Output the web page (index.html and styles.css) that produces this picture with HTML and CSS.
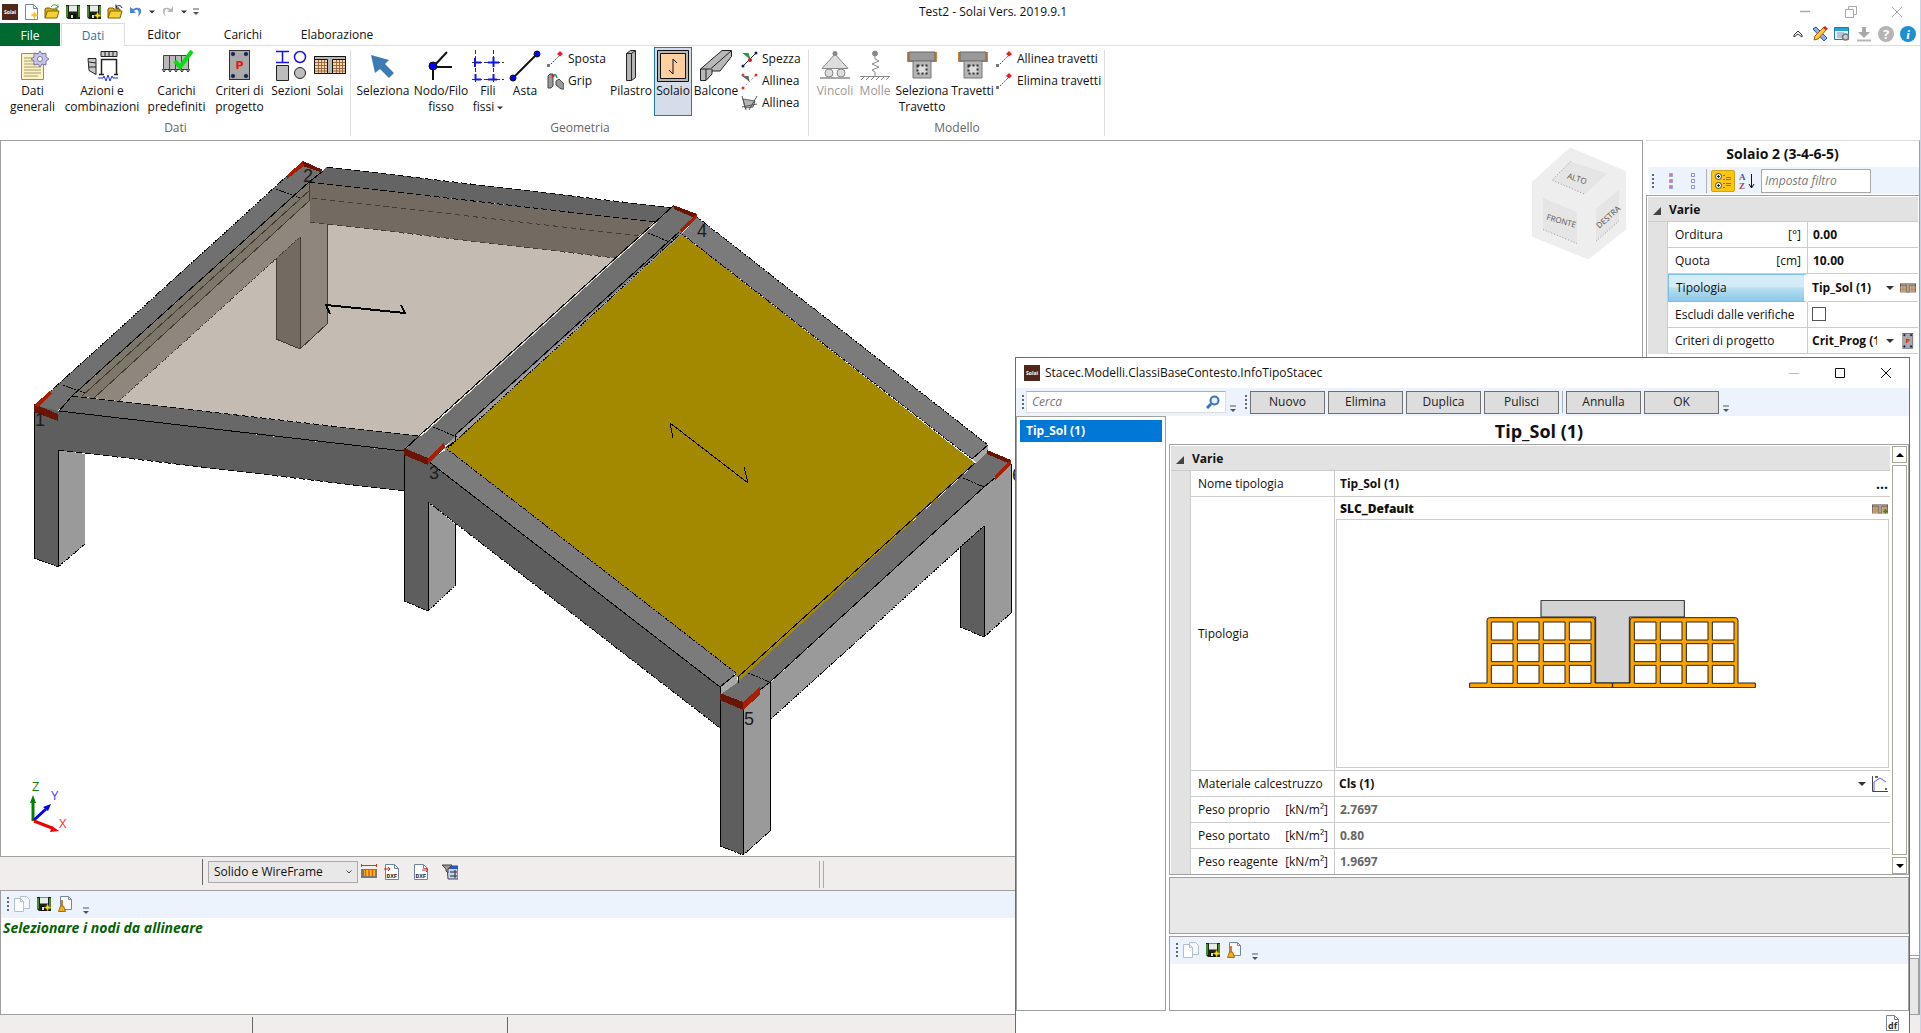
FILE: index.html
```html
<!DOCTYPE html>
<html lang="it">
<head>
<meta charset="utf-8">
<title>Test2 - Solai Vers. 2019.9.1</title>
<link rel="stylesheet" href="styles.css">
</head>
<body>
<svg class="defs" aria-hidden="true">
  <symbol id="logo" viewBox="0 0 16 16"><rect width="16" height="16" fill="#4f281a"/><text x="8" y="10" text-anchor="middle" class="logo-text">Solai</text></symbol>
  <symbol id="disk" viewBox="0 0 16 16"><path d="M1 1h14v14H3l-2-2z" fill="#1c241c"/><path d="M4 1.500h8v6H4z" fill="#e8ece8"/><path d="M2 2v11M14 2v11" stroke="#58a838" stroke-width="1.500"/><path d="M5 10h6v5H5z" fill="#111"/><path d="M6 11h2v3H6z" fill="#ddd"/></symbol>
  <symbol id="disk-new" viewBox="0 0 16 16"><use href="#disk"/><path d="M11.500 8l1 2.500 2.500 1-2.500 1-1 2.500-1-2.500-2.500-1 2.500-1z" fill="#ffe000" stroke="#d8a800" stroke-width=".5"/></symbol>
  <symbol id="folder" viewBox="0 0 16 16"><path d="M1 14V5l1-1h4l1 1h6v3" fill="#e0b400" stroke="#7c6200"/><path d="M1 14l2.500-7H15l-2 7z" fill="#f5d03a" stroke="#7c6200"/></symbol>
  <symbol id="page" viewBox="0 0 16 16"><path d="M2.500.500h8l4 4v11h-12z" fill="#fff" stroke="#7088a0"/><path d="M10.500.500v4h4" fill="none" stroke="#7088a0"/></symbol>
  <symbol id="copy" viewBox="0 0 16 16"><path d="M6.500.500h6l3 3v9h-9z" fill="#f4f7fb" stroke="#b4bfcc"/><path d="M.500 2.500h6l3 3v10h-9z" fill="#fff" stroke="#b4bfcc"/><path d="M6.500 2.500v3h3" fill="none" stroke="#b4bfcc"/></symbol>
  <symbol id="clean" viewBox="0 0 16 16"><path d="M2.500.500h8l3 3v10h-11z" fill="#fff" stroke="#7088a0"/><path d="M10.500.500v3h3" fill="none" stroke="#7088a0"/><path d="M4 4v6" stroke="#b05a00" stroke-width="1.500"/><path d="M2.500 10h3l2 5.500H.500z" fill="#f4b020" stroke="#b06a00"/></symbol>
  <symbol id="more" viewBox="0 0 8 8"><path d="M1 1h6" stroke="#555"/><path d="M1 4h6L4 7z" fill="#555"/></symbol>
  <symbol id="caret" viewBox="0 0 8 8"><path d="M0 2h8L4 6z" fill="#333"/></symbol>
  <symbol id="slab" viewBox="0 0 32 18"><rect x=".5" y=".5" width="31" height="17" fill="#ffcf9f" stroke="#111"/><path d="M1 6.500h12M1 9.500h12M1 12.500h12M1 15h12M4.500 4v13M7.500 4v13M10.500 4v13M19 6.500h12M19 9.500h12M19 12.500h12M19 15h12M22.500 4v13M25.500 4v13M28.500 4v13" stroke="#7a5a3a" stroke-width=".8"/><path d="M.500.500h31v3H18.500v14h-5v-14H.500z" fill="#b8b8b8" stroke="#111"/></symbol>
  <symbol id="criteria" viewBox="0 0 22 32"><rect x=".5" y=".5" width="20" height="29" fill="#a9a9a9" stroke="#333"/><g fill="#14148c" stroke="#111" stroke-width=".5"><circle cx="4" cy="4" r="1.800"/><circle cx="17" cy="4" r="1.800"/><circle cx="4" cy="26" r="1.800"/><circle cx="17" cy="26" r="1.800"/></g><text x="10.500" y="19" text-anchor="middle" class="p-text">P</text></symbol>
  <symbol id="move" viewBox="0 0 17 17"><path d="M2 15L14 3" stroke="#222" stroke-dasharray="1.500 1.500"/><rect y="13" width="3" height="3" fill="#777"/><path d="M13 0l3 3-3 2.500-3-2.500z" fill="#ee1c24"/></symbol>
  <symbol id="joist" viewBox="0 0 32 32"><path d="M1 2h30v10H1z" fill="#d9822b"/><path d="M3 2h26v9H3z" fill="#999" stroke="#666"/><path d="M7 11h18v17H7z" fill="#b5b5b5" stroke="#777"/><path d="M11.500 15.500h9v8h-9z" fill="#ddd" stroke="#333" stroke-width="2" stroke-dasharray="2 2"/></symbol>
  <symbol id="dxf" viewBox="0 0 16 16"><path d="M1.500.500h9l4 4v11h-13z" fill="#fff" stroke="#70849a"/><path d="M10.500.500v4h4" fill="none" stroke="#70849a"/><text x="8" y="14" text-anchor="middle" class="dxf-text">DXF</text></symbol>
</svg>

<div class="app">
  <header class="titlebar">
    <div class="quick">
      <svg class="i16"><use href="#logo"/></svg>
      <button aria-label="Nuovo file"><svg class="i16" viewBox="0 0 16 16"><use href="#page"/><path d="M11.500 7l1.300 3 3 1-3 1.300-1.300 3-1.300-3-3-1.300 3-1z" fill="#f8c030"/></svg></button>
      <button aria-label="Apri"><svg class="i16" viewBox="0 0 16 16"><use href="#folder"/><path d="M7 3c2-3 5-3 7 0m0-2.500V4h-3" fill="none" stroke="#27a327"/></svg></button>
      <button aria-label="Salva"><svg class="i16"><use href="#disk"/></svg></button>
      <button aria-label="Salva con nome"><svg class="i16"><use href="#disk-new"/></svg></button>
      <button aria-label="Chiudi file"><svg class="i16" viewBox="0 0 16 16"><use href="#folder"/><path d="M15 4c-1-3-4-3-6-1m0-2.500V4h3" fill="none" stroke="#111"/></svg></button>
      <button aria-label="Annulla"><svg class="i16" viewBox="0 0 16 16"><path d="M2 3v6h6L6 7c3-3 6-1 4 6 6-6 3-12-5-8z" fill="#4a86d8"/></svg></button>
      <svg class="i6"><use href="#caret"/></svg>
      <button aria-label="Ripeti"><svg class="i16" viewBox="0 0 16 16"><path d="M13 2v6H7l2-2c-3-2-6 0-3 7-6-6-3-12 5-8z" fill="#b8b8b8"/></svg></button>
      <svg class="i6"><use href="#caret"/></svg>
      <svg class="i8"><use href="#more"/></svg>
    </div>
    <h1>Test2 - Solai Vers. 2019.9.1</h1>
    <div class="winctl faded">
      <button aria-label="Riduci"><svg viewBox="0 0 12 12"><path d="M1 5.500h10" stroke="currentColor" stroke-width="1.500"/></svg></button>
      <button aria-label="Ripristina"><svg viewBox="0 0 12 12" fill="none" stroke="currentColor"><path d="M.500 3.500h8v8h-8z"/><path d="M3.500 3V.500h8v8H9"/></svg></button>
      <button aria-label="Chiudi"><svg viewBox="0 0 12 12"><path d="M1 1l10 10M11 1L1 11" stroke="currentColor"/></svg></button>
    </div>
  </header>

  <nav class="tabs">
    <button class="tab file">File</button>
    <button class="tab active">Dati</button>
    <button class="tab editor">Editor</button>
    <button class="tab">Carichi</button>
    <button class="tab elab">Elaborazione</button>
    <div class="tools">
      <button aria-label="Comprimi"><svg class="i16" viewBox="0 0 16 16"><path d="M4 9l4-4 4 4v2l-4-3-4 3z" fill="none" stroke="#333"/></svg></button>
      <button aria-label="Strumenti"><svg class="i16" viewBox="0 0 16 16"><path d="M1 3l3-2 11 11-3 3z" fill="#8fb0f0" stroke="#2850b8"/><path d="M2 14l1-4 9-9 3 2-9 10z" fill="#ffc840" stroke="#a06000"/><path d="M11 2l2-2 3 3-2 1z" fill="#d02020"/></svg></button>
      <button aria-label="Opzioni"><svg class="i16" viewBox="0 0 16 16"><path d="M.500 1.500h14v12H.500z" fill="#e8f4fc" stroke="#2878a8"/><path d="M1 3.500h13" stroke="#28a0d8" stroke-width="3"/><path d="M3 7h7M3 9h5M3 11h5" stroke="#7898a8"/><circle cx="11.500" cy="11" r="3" fill="#ccc" stroke="#777" stroke-width="1.500"/></svg></button>
      <button aria-label="Scarica"><svg class="i16" viewBox="0 0 16 16"><path d="M6 1h4v5h4l-6 6-6-6h4z" fill="#a8a8a8"/><path d="M1 14.500h14" stroke="#b8b8b8" stroke-width="2"/></svg></button>
      <button aria-label="Guida"><svg class="i16" viewBox="0 0 16 16"><circle cx="8" cy="8" r="8" fill="#b4b4b4"/><text x="8" y="13" text-anchor="middle" class="badge-text">?</text></svg></button>
      <button aria-label="Informazioni"><svg class="i16" viewBox="0 0 16 16"><circle cx="8" cy="8" r="8" fill="#1c90d0"/><text x="8" y="13" text-anchor="middle" class="badge-text serif">i</text></svg></button>
    </div>
  </nav>

  <section class="ribbon">
    <div class="group">
      <div class="cmds">
        <button class="cmd w57"><svg viewBox="0 0 32 32"><path d="M4.500 3.500h22v26h-22z" fill="#fbf3c8" stroke="#9a905c"/><path d="M7 8h12M7 11h12M7 14h17M7 17h17M7 20h17M7 23h17M7 26h14" stroke="#a89c60"/><g fill="#c8c4e8" stroke="#7a74a8"><path d="M23 1l2 3 4-1 0 4 3 2-3 2 0 4-4-1-2 3-2-3-4 1 0-4-3-2 3-2 0-4 4 1z"/><circle cx="23" cy="9" r="2.500" fill="#fff"/></g></svg>Dati<br>generali</button>
        <button class="cmd w82"><svg viewBox="0 0 32 32" fill="none" stroke="#222"><path d="M15 1.500h16v5H15zM19 1v5M23 1v5M27 1v5M2 8.500h8v16l-7-4zM3 12l7 1M3 17h7" fill="#c8c8c8"/><path d="M15.500 25V9.500h15V25M13 24.500h5M28 24.500h4" stroke-width="1.500"/><path d="M12 28h5l1-2 2 5 2-6 2 6 2-5 1 2h5" stroke="#2030ff"/></svg>Azioni e<br>combinazioni</button>
        <button class="cmd w67"><svg viewBox="0 0 32 32"><path d="M2.500 5.500h25v14h-25zM8.500 5v15M14.500 5v15M20.500 5v15" fill="#b8b8b8" stroke="#444"/><path d="M1 19l2 3 2-3M7 19l2 3 2-3M13 19l2 3 2-3M19 19l2 3 2-3M25 19l2 3 2-3" fill="none" stroke="#222"/><path d="M14 11l5 6L31 1" fill="none" stroke="#00e010" stroke-width="4"/></svg>Carichi<br>predefiniti</button>
        <button class="cmd w59"><svg viewBox="-5 0 32 32"><use href="#criteria" width="22" height="32"/></svg>Criteri di<br>progetto</button>
        <button class="cmd w44"><svg viewBox="0 0 32 32"><path d="M1 1.500h13M1 12.500h13M7.500 1v12" stroke="#1414f0" stroke-width="1.500"/><circle cx="25" cy="7" r="5.500" fill="none" stroke="#1414f0" stroke-width="1.500"/><path d="M1.500 15.500h12v15h-12z" fill="#bdbdbd" stroke="#222"/><circle cx="25" cy="23" r="5.500" fill="#bdbdbd" stroke="#222"/></svg>Sezioni</button>
        <button class="cmd w34"><svg viewBox="0 -6 32 32"><use href="#slab" width="32" height="18"/></svg>Solai</button>
      </div>
      <h2>Dati</h2>
    </div>
    <div class="group">
      <div class="cmds">
        <button class="cmd w56"><svg viewBox="0 0 32 32"><path d="M4 5l18 5-4 4 9 9-5 5-9-9-5 4z" fill="#3f7ab5"/></svg>Seleziona</button>
        <button class="cmd w60"><svg viewBox="0 0 32 32" stroke="#111" stroke-width="2"><path d="M8 30V17M8 17h19M8 17L22 2" fill="none"/><circle cx="8" cy="16" r="4" fill="#0000f0" stroke-width="1"/></svg>Nodo/Filo<br>fisso</button>
        <button class="cmd w34"><svg viewBox="0 0 32 32"><path d="M3.500 0v32M21.500 0v32M0 12.500h32M0 29.500h32" stroke="#333" stroke-dasharray="4 2"/><path d="M3 8v9M3 12.500h6M16 12.500h11M21.500 7v10M3.500 24v5.500H9M16 29.500h9M21.500 24v6" stroke="#1414f0" stroke-width="2" fill="none"/></svg>Fili<br>fissi <svg class="i6"><use href="#caret"/></svg></button>
        <button class="cmd w40"><svg viewBox="0 0 32 32"><path d="M4 28L28 4" stroke="#111" stroke-width="2"/><circle cx="4" cy="28" r="3" fill="#0000f0" stroke="#111"/><circle cx="28" cy="4" r="3" fill="#0000f0" stroke="#111"/></svg>Asta</button>
        <div class="stack w64">
          <button><svg class="i17"><use href="#move"/></svg>Sposta</button>
          <button><svg class="i17" viewBox="0 0 17 17"><path d="M1 3l2-2h3v12l-2 2H1zM9 8l3-2 5 5v5h-3L9 12z" fill="#999" stroke="#444"/><path d="M6 3q3-3 4 2" fill="none" stroke="#289848" stroke-width="1.500"/><circle cx="6" cy="3" r="1.500" fill="#e02020"/></svg>Grip</button>
        </div>
        <button class="cmd w44"><svg viewBox="0 0 32 32"><path d="M11.500 3.500l4-3h5v27l-4 3h-5zM11.500 3.500h5v27M16.500 3.500l4-3" fill="#b4b4b4" stroke="#222"/></svg>Pilastro</button>
        <button class="cmd w38 on"><svg viewBox="0 0 32 32"><path d="M.500.500h31v31H.500z" fill="#b8b8b0" stroke="#111"/><path d="M3.500 3.500h25v25h-25z" fill="#ffcfa0" stroke="#111"/><path d="M12 20l4 4V9l4 4" fill="none" stroke="#111"/></svg>Solaio</button>
        <button class="cmd w46"><svg viewBox="0 0 32 32"><path d="M.500 19L22 .500h9.500v6L20 21h-8v3l-6 6.500H.500z" fill="#b8b8b8" stroke="#222"/><path d="M.500 19h10L31 1M6 30V19M12 21v-2" fill="none" stroke="#222"/></svg>Balcone</button>
        <div class="stack w66">
          <button><svg class="i17" viewBox="0 0 17 17"><path d="M2 15L15 2" stroke="#222"/><path d="M2 2l7 6-2-6" fill="#289848" stroke="#289848"/><circle cx="2" cy="15" r="1.500" fill="#14147c"/><circle cx="15" cy="2" r="1.500" fill="#14147c"/><circle cx="9" cy="9" r="2" fill="#c02020"/></svg>Spezza</button>
          <button><svg class="i17" viewBox="0 0 17 17"><path d="M2 15L15 2" stroke="#999" stroke-dasharray="2 2"/><path d="M2 3l6 5-1-5" fill="#666" stroke="#666"/><g fill="#e83030"><circle cx="2" cy="2" r="1.500"/><circle cx="2" cy="15" r="1.500"/><circle cx="15" cy="2" r="1.500"/></g></svg>Allinea</button>
          <button><svg class="i17" viewBox="0 0 17 17"><path d="M2 4l12 2-2 6-8 1z" fill="#b4b4b4" stroke="#666"/><path d="M1 1l4 14M16 1L8 15M1 12l15-3" stroke="#555" fill="none"/></svg>Allinea</button>
        </div>
      </div>
      <h2>Geometria</h2>
    </div>
    <div class="group">
      <div class="cmds">
        <button class="cmd w44" disabled><svg viewBox="0 0 32 32"><path d="M16 4L3 18.500h26z" fill="#ddd" stroke="#888"/><circle cx="16" cy="3.500" r="2.500" fill="#888"/><circle cx="10" cy="23" r="4" fill="#ddd" stroke="#888"/><circle cx="22" cy="23" r="4" fill="#ddd" stroke="#888"/><path d="M1 28h30" stroke="#888" stroke-width="1.500"/></svg>Vincoli</button>
        <button class="cmd w36" disabled><svg viewBox="0 0 32 32" fill="none" stroke="#888"><circle cx="16" cy="3.500" r="2.500" fill="#888"/><path d="M16 5v4l4 2-7 3 7 3-7 3 3 2v4M1 26.500h30"/><path d="M2 30l3-3M7 30l3-3M12 30l3-3M17 30l3-3M22 30l3-3M27 30l3-3"/></svg>Molle</button>
        <button class="cmd w58"><svg><use href="#joist"/></svg>Seleziona<br>Travetto</button>
        <button class="cmd w43"><svg><use href="#joist"/></svg>Travetti</button>
        <div class="stack w107">
          <button><svg class="i17"><use href="#move"/></svg>Allinea travetti</button>
          <button><svg class="i17"><use href="#move"/></svg>Elimina travetti</button>
        </div>
      </div>
      <h2>Modello</h2>
    </div>
  </section>

  <main class="work">
    <div class="left">
      <div class="viewport">
        <svg class="scene" viewBox="1 141 1040 715" width="1040" height="715" stroke-linejoin="round">
          <g shape-rendering="crispEdges">
          <path d="M309 182L655 222 418 436 72 396z" fill="#c4bcb2"/>
          <path d="M309 182L654 222 615 258 310 222z" fill="#736b61"/>
          <path d="M309 182L72 396 94 398 310 200z" fill="#7d766a"/>
          <path d="M310 200L94 398 119 401 300 237V349L327 324V224L310 222z" fill="#8f877d"/>
          <path d="M276 258L300 237V349L276 339z" fill="#736b61"/>
          <g fill="none" stroke="#453c30">
            <path d="M312 198L641 236M310 222L615 258" stroke-dasharray="5 4"/>
            <path d="M310 190L82 396M310 200L94 398M309 182L310 200M300 237V349M327 224V324L300 349 276 339V259"/>
          </g>
          <path d="M327 167L673 208 655 222 309 182z" fill="#646464"/>
          <path d="M34 405L51 391 287 176 303 162 323 171 309 182 72 396 58 411z" fill="#707070"/>
          <path d="M72 396L418 436 404 452 59 411z" fill="#686868"/>
          <path d="M34 405L58 411 404 452V491L58 450V567L34 558z" fill="#5e5e5e"/>
          <path d="M58 450L85 454V544L58 567z" fill="#9a9a9a"/>
          <path d="M119 401L300 237" stroke="#453c30" stroke-dasharray="1 1"/>
          <g fill="none" stroke="#000">
            <path d="M327 167L673 208M309 182L655 222M72 396L418 436M58 450L404 491" stroke-dasharray="6 3"/>
            <path d="M51 391L287 176M276 189L300 198M63 385L85 393M34 558L58 567 85 544" stroke-dasharray="2 1"/>
            <path d="M309 182L72 396 59 411 404 451M309 182L323 171M34 405V558M58 450V567"/>
          </g>

          <path d="M404 449L420 436 673 206 697 217 681 234 455 437 428 461z" fill="#707070"/>
          <path d="M681 233L455 436 444 449 449 452 684 236z" fill="#9c9c9c"/>
          <path d="M682 234L975 463 738 684V677L447 449z" fill="#a38900"/>
          <path d="M697 217L988 445 972 459 682 234z" fill="#7b7b7b"/>
          <path d="M972 459L988 445V453L976 463z" fill="#a8a8a8"/>
          <path d="M988 452L1011 461 995 477 984 487 770 682 743 705 720 695 738 682 976 463z" fill="#6e6e6e"/>
          <path d="M1011 461V613L984 637V526L771 719V682L984 487z" fill="#9a9a9a"/>
          <path d="M960 547L984 526V637L960 627z" fill="#5e5e5e"/>
          <path d="M447 449L736 673 720 687 428 461z" fill="#7b7b7b"/>
          <path d="M404 450L428 461 720 687V728L428 502V611L404 601z" fill="#5e5e5e"/>
          <path d="M428 502L455 524V586L428 611z" fill="#9a9a9a"/>
          <path d="M720 687L736 674 738 682 720 695z" fill="#a8a8a8"/>
          <path d="M720 696L743 705V855L720 846z" fill="#5e5e5e"/>
          <path d="M743 705L770 682V831L743 855z" fill="#9a9a9a"/>
          <path d="M421 436L657 222" stroke="#e8e4dc"/>
          <g fill="none" stroke="#000">
            <path d="M697 217L988 445M682 234L972 459M447 449L736 673M428 502L720 728M771 719L984 526 960 547M681 233L447 449M404 601L428 611 455 586M720 846L743 855 770 831M960 627L984 637 1011 613M648 233L672 243M433 427L457 437M963 478L984 487M748 673L770 682" stroke-dasharray="2 1"/>
            <path d="M404 450L420 435 673 206M679 232L455 435V441L446 448M428 461L720 687 736 674M988 445L972 459M975 463L738 677V683M984 487L770 682 755 694M984 487L996 477M404 455V601M428 502V611M455 524V586M720 687V846M743 708V855M770 682V831M960 547V627M984 526V637M1011 464V613"/>
          </g>
          <g fill="#6a1405">
            <path d="M34 404L58 414V421L34 412zM303 161L323 170 320 172 303 166zM404 448L428 458V465L404 455zM673 205L697 214 695 218 674 209zM720 693L743 702V710L720 700zM987 450L1011 460 1008 463 987 454z"/>
          </g>
          <g fill="#a51e05">
            <path d="M34 405L50 391 52 394 38 407zM287 175L303 161 304 166 287 179zM428 458L444 443 445 447 428 465zM697 214V218L681 233 680 229zM743 702L760 687V695L743 710zM1011 460V464L995 481V475z"/>
          </g>
          <g fill="none" stroke="#000">
            <path d="M330 314L326 305 405 313 401 305" stroke-width="2"/>
            <path d="M673 438L670 423 748 483 744 467"/>
          </g>
          </g>
          <g class="node-text"><text x="35" y="426">1</text><text x="303" y="182">2</text><text x="429" y="479">3</text><text x="697" y="237">4</text><text x="744" y="725">5</text><text x="1012" y="481">6</text></g>
          <g stroke-width="3"><path d="M33 821V801" stroke="#008000"/><path d="M34 820L46 809" stroke="#0000f0"/><path d="M34 821L52 828" stroke="#f00000"/></g>
          <path d="M33 795l3 8h-6z" fill="#008000"/><path d="M51 804l-3 7-5-4z" fill="#0000f0"/><path d="M59 831l-9 1 2-6z" fill="#f00000"/>
          <g class="axis-text"><text x="32" y="791" fill="#108010">Z</text><text x="51" y="800" fill="#4040ff">Y</text><text x="59" y="828" fill="#ff3030">X</text></g>
        </svg>
        <svg class="cube" viewBox="156 443 282 338">
          <path d="M270 443L438 515V690L325 780 156 712V547z" fill="#eee"/>
          <path d="M270 485L382 522 314 584 216 542zM189 595L291 638V732L189 690zM348 628L417 570V664L348 725z" fill="#e5e5e5"/>
          <path d="M272 486L216 542 314 584M189 690L291 732M348 725L417 664" fill="none" stroke="#999" stroke-width="3" stroke-dasharray="3 6"/>
          <g class="cube-text"><text transform="translate(260 536) rotate(18)">ALTO</text><text transform="translate(198 660) rotate(16)">FRONTE</text><text transform="translate(358 688) rotate(-42)">DESTRA</text></g>
        </svg>
      </div>
      <div class="viewbar">
        <label class="sr" for="view">Vista</label>
        <div class="combo"><select id="view"><option>Solido e WireFrame</option></select><svg class="i8" viewBox="0 0 8 8"><path d="M1.500 2.500L4 5l2.500-2.500" fill="none" stroke="#444"/></svg></div>
        <button aria-label="Misura"><svg class="i16" viewBox="0 0 16 16"><path d="M.500 0v3M15.500 0v3M0 1.500h16" stroke="#c04010"/><path d="M0 5h16v9H0z" fill="#777"/><path d="M3 6h11v6H3z" fill="#f8c020"/><path d="M4.500 6v6M8 6v6M11.500 6v6" stroke="#f05010" stroke-width="1.500"/></svg></button>
        <button aria-label="Importa DXF"><svg class="i16" viewBox="0 0 16 16"><use href="#dxf"/><path d="M0 5h6M4 3l2 2-2 2" stroke="#d02020" fill="none"/></svg></button>
        <button class="apart" aria-label="Esporta DXF"><svg class="i16" viewBox="0 0 16 16"><use href="#dxf"/><path d="M9 6h6M13 4l2 2-2 2" stroke="#d02020" fill="none"/></svg></button>
        <button class="apart" aria-label="Filtra"><svg class="i16" viewBox="0 0 16 16"><path d="M5 2h11v13H6z" fill="#c8d4e8" stroke="#446"/><path d="M5 3.500h11" stroke="#2858c8" stroke-width="3"/><path d="M8 8h3M8 12h3" stroke="#223"/><path d="M12 7h2v2h-2zM12 11h2v2h-2z" fill="#fff" stroke="#223"/><path d="M0 1h10L6 5v4L4 7V5z" fill="#999" stroke="#444"/></svg></button>
        <i class="split"></i>
      </div>
      <div class="messages">
        <div class="toolbar"><i class="grip"></i><button aria-label="Copia"><svg class="i16"><use href="#copy"/></svg></button><button aria-label="Salva messaggi"><svg class="i16"><use href="#disk-new"/></svg></button><button aria-label="Pulisci messaggi"><svg class="i16"><use href="#clean"/></svg></button><svg class="i8 low"><use href="#more"/></svg></div>
        <p>Selezionare i nodi da allineare</p>
      </div>
    </div>

    <aside class="props">
      <h2>Solaio 2 (3-4-6-5)</h2>
      <div class="toolbar">
        <i class="grip"></i>
        <button aria-label="Espandi"><svg class="i16" viewBox="0 0 16 16"><path d="M6.500.500h3v3h-3zM6.500 6.500h3v3h-3zM6.500 12.500h3v3h-3z" fill="#f07078" stroke="#9aa0e0"/></svg></button>
        <button class="second" aria-label="Comprimi tutto"><svg class="i16" viewBox="0 0 16 16"><path d="M6.500.500h3v3h-3zM6.500 6.500h3v3h-3zM6.500 12.500h3v3h-3z" fill="#fff" stroke="#8890d0"/></svg></button>
        <i class="rule"></i>
        <button class="cat" aria-label="Per categoria"><svg class="i16" viewBox="0 0 16 16"><circle cx="3.500" cy="3.500" r="3" fill="#fff" stroke="#345"/><circle cx="3.500" cy="12.500" r="3" fill="#fff" stroke="#345"/><path d="M2 3.500h3M3.500 2v3M2 12.500h3M3.500 11v3" stroke="#123"/><path d="M8 2.500h2M8 6.500h2M8 10.500h2M8 14.500h2M11 4.500h5M11 6.500h5M11 10.500h5M11 12.500h5" stroke="#8a7010"/></svg></button>
        <button aria-label="Ordina"><svg class="i16" viewBox="0 0 16 16"><text x="0" y="7" class="az" fill="#4058a0">A</text><text x="0" y="16" class="az" fill="#b04048">Z</text><path d="M12.500 1v13M10 11l2.500 4 2.500-4" stroke="#111" fill="none"/></svg></button>
        <input class="filter" type="text" placeholder="Imposta filtro" aria-label="Imposta filtro">
      </div>
      <div class="sheet">
        <table>
          <colgroup><col class="c20"><col class="c140"><col></colgroup>
          <thead><tr><th colspan="3"><svg class="i8 tri" viewBox="0 0 8 8"><path d="M8 0v8H0z" fill="#444"/></svg>Varie</th></tr></thead>
          <tbody>
            <tr><td class="gut" rowspan="5"></td><th><span><label for="ord">Orditura</label><i>[°]</i></span></th><td><input id="ord" value="0.00"></td></tr>
            <tr><th><span><label for="quo">Quota</label><i>[cm]</i></span></th><td><input id="quo" value="10.00"></td></tr>
            <tr class="sel"><th><span><label for="tip">Tipologia</label></span></th><td><div class="pick"><select id="tip"><option>Tip_Sol (1)</option></select><svg class="i8"><use href="#caret"/></svg><svg class="i16" viewBox="0 0 32 18"><use href="#slab" width="32" height="18"/></svg></div></td></tr>
            <tr><th><span><label for="esc">Escludi dalle verifiche</label></span></th><td><input id="esc" type="checkbox"></td></tr>
            <tr><th><span><label for="cri">Criteri di progetto</label></span></th><td><div class="pick"><select id="cri"><option>Crit_Prog (1)</option></select><svg class="i8"><use href="#caret"/></svg><svg class="i16" viewBox="0 0 22 31"><use href="#criteria" width="22" height="32"/></svg></div></td></tr>
          </tbody>
        </table>
      </div>
      <div class="hint"></div>
    </aside>
  </main>

  <footer class="status"><i></i><i></i></footer>
</div>

<section class="dialog" role="dialog" aria-labelledby="dlg-title">
  <header>
    <svg class="i16"><use href="#logo"/></svg>
    <h2 id="dlg-title">Stacec.Modelli.ClassiBaseContesto.InfoTipoStacec</h2>
    <div class="winctl">
      <button class="dim" aria-label="Riduci" disabled><svg viewBox="0 0 12 12"><path d="M1 6.500h10" stroke="currentColor"/></svg></button>
      <button aria-label="Ingrandisci"><svg viewBox="0 0 12 12"><path d="M1.500 1.500h9v9h-9z" fill="none" stroke="currentColor"/></svg></button>
      <button aria-label="Chiudi"><svg viewBox="0 0 12 12"><path d="M1 1l10 10M11 1L1 11" stroke="currentColor"/></svg></button>
    </div>
  </header>
  <div class="toolbar acts">
    <i class="grip"></i>
    <div class="search"><input type="text" placeholder="Cerca" aria-label="Cerca"><svg class="i14" viewBox="0 0 14 14"><path d="M1 13l4-4" stroke="#3a70b8" stroke-width="3"/><circle cx="8.500" cy="5.500" r="4" fill="#e4f0fc" stroke="#3a70b8" stroke-width="2"/></svg></div>
    <svg class="i8 low"><use href="#more"/></svg>
    <i class="grip"></i>
    <button class="btn">Nuovo</button><button class="btn">Elimina</button><button class="btn">Duplica</button><button class="btn">Pulisci</button><i class="bar"></i><button class="btn">Annulla</button><button class="btn">OK</button>
    <svg class="i8 low"><use href="#more"/></svg>
  </div>
  <div class="panes">
    <ul class="types"><li>Tip_Sol (1)</li></ul>
    <div class="detail">
      <h3>Tip_Sol (1)</h3>
      <div class="sheet">
        <table>
          <colgroup><col class="c20"><col class="c144"><col></colgroup>
          <thead><tr><th colspan="3"><svg class="i8 tri" viewBox="0 0 8 8"><path d="M8 0v8H0z" fill="#444"/></svg>Varie</th></tr></thead>
          <tbody>
            <tr><td class="gut" rowspan="6"></td><th><span><label for="nome">Nome tipologia</label></span></th><td><div class="pick"><input id="nome" value="Tip_Sol (1)"><button class="dots">...</button></div></td></tr>
            <tr class="tall"><th><span>Tipologia</span></th><td><div class="preview"><div class="pick"><b>SLC_Default</b><svg class="i16" viewBox="0 0 32 18"><use href="#slab" width="32" height="18"/><path d="M27 9v9M23 14h9" stroke="#189818" stroke-width="3"/></svg></div>
              <div class="canvas"><svg viewBox="87 60 861 264">
                <path d="M303 61h430v50H568v198H467V111H303z" fill="#d3d3d3" stroke="#222" stroke-width="3"/>
                <g fill="orange" stroke="#222" stroke-width="3"><path id="block" d="M89 309h52V121q0-8 8-8h308q8 0 8 8v188h52v14H89z"/><use href="#block" x="429"/></g>
                <g fill="#fff" stroke="#222" stroke-width="3"><g id="cells"><path d="M154 126h65v54h-65zM232 126h65v54h-65zM310 126h65v54h-65zM388 126h65v54h-65z"/><path d="M154 191h65v54h-65zM232 191h65v54h-65zM310 191h65v54h-65zM388 191h65v54h-65z"/><path d="M154 256h65v54h-65zM232 256h65v54h-65zM310 256h65v54h-65zM388 256h65v54h-65z"/></g><use href="#cells" x="429"/></g>
              </svg></div></div></td></tr>
            <tr><th><span><label for="mat">Materiale calcestruzzo</label></span></th><td><div class="pick"><select id="mat"><option>Cls (1)</option></select><svg class="i8"><use href="#caret"/></svg><svg class="i16" viewBox="0 0 16 16"><path d="M.500 0v15.500H16" fill="none" stroke="#444"/><path d="M2 15V6l6-4 6 4" fill="none" stroke="#5a5af0"/><path d="M3 1h3M13 13h2" stroke="#666" stroke-width="2"/></svg></div></td></tr>
            <tr><th><span>Peso proprio<i>[kN/m²]</i></span></th><td class="ro">2.7697</td></tr>
            <tr><th><span>Peso portato<i>[kN/m²]</i></span></th><td class="ro">0.80</td></tr>
            <tr><th><span>Peso reagente<i>[kN/m²]</i></span></th><td class="ro">1.9697</td></tr>
          </tbody>
        </table>
        <div class="scroll"><button aria-label="Su"><svg class="i8" viewBox="0 0 8 8"><path d="M0 6h8L4 2z"/></svg></button><i></i><button aria-label="Giù"><svg class="i8" viewBox="0 0 8 8"><path d="M0 2h8L4 6z"/></svg></button></div>
      </div>
      <div class="hint"></div>
      <div class="messages">
        <div class="toolbar"><i class="grip"></i><button aria-label="Copia"><svg class="i16"><use href="#copy"/></svg></button><button aria-label="Salva messaggi"><svg class="i16"><use href="#disk-new"/></svg></button><button aria-label="Pulisci messaggi"><svg class="i16"><use href="#clean"/></svg></button><svg class="i8 low"><use href="#more"/></svg></div>
      </div>
    </div>
  </div>
  <footer><button aria-label="Formato"><svg class="i16" viewBox="0 0 16 16"><path d="M1.500.500h8l4 4v11h-12z" fill="#fff" stroke="#70849a"/><path d="M9.500.500v4h4" fill="none" stroke="#70849a"/><text x="3" y="14" class="df-text">df</text></svg></button></footer>
</section>
</body>
</html>
```
FILE: styles.css
```css
* { box-sizing: border-box; }
body {
  margin: 0;
  overflow: hidden;
  background: #fff;
  color: #111;
  font: 12px/16px "Open Sans", "Noto Sans", sans-serif;
}
h1, h2, h3, p, ul { margin: 0; padding: 0; font: inherit; list-style: none; }
button { margin: 0; padding: 0; border: 0; background: none; color: inherit; font: inherit; }
input, select { font: inherit; color: inherit; }
svg { display: block; flex: none; }
i { font-style: normal; flex: none; }
.defs { position: absolute; width: 0; height: 0; }
.sr { position: absolute; width: 1px; height: 1px; overflow: hidden; clip-path: inset(50%); }
.i17 { width: 17px; height: 17px; }
.i16 { width: 16px; height: 16px; }
.i14 { width: 14px; height: 14px; }
.i8 { width: 8px; height: 8px; }
.i6 { width: 6px; height: 6px; }
.logo-text { font: bold 5px "Open Sans", sans-serif; fill: #fff; }
.p-text { font: bold 11px "DejaVu Sans", sans-serif; fill: #f01010; }
.dxf-text { font: bold 6px "Liberation Mono", monospace; fill: #222; }
.df-text { font: bold 9px "Open Sans", sans-serif; fill: #333; }
.badge-text { font: bold 13px "Open Sans", sans-serif; fill: #fff; }
.badge-text.serif { font-family: "Liberation Serif", serif; font-style: italic; }
.az { font: bold 9px "Liberation Serif", serif; }

.app { display: flex; flex-direction: column; height: 100vh; border-right: 1px solid #c8d4ec; }

/* title bar and tabs */
.titlebar { display: grid; grid-template-columns: 1fr auto 1fr; align-items: center; height: 23px; }
.quick { display: flex; align-items: center; gap: 5px; padding-left: 2px; }
.titlebar h1 { padding: 1px 0 0 66px; }
.winctl { display: flex; justify-self: end; }
.winctl button { width: 46px; }
.winctl svg { width: 12px; height: 12px; margin: auto; }
.faded { color: #aaa; }
.dim { color: #bbb; }
.tabs { display: flex; height: 23px; border-bottom: 1px solid #ddd; }
.tab { width: 80px; padding-top: 2px; }
.tab.file { width: 60px; height: 23px; background: #00692f; color: #fff; }
.tab.active { width: 64px; height: 23px; margin-left: 1px; border: 1px solid #ddd; border-bottom: 0; background: #fff; color: #1f74a8; }
.tab.editor { width: 78px; }
.tab.elab { width: 108px; }
.tools { display: flex; align-items: center; gap: 6px; margin-left: auto; padding-right: 4px; }

/* ribbon */
.ribbon { display: flex; height: 94px; }
.group { margin: 4px 0; padding: 0 3px 0 4px; border-right: 1px solid #ddd; }
.group h2 { padding-top: 2px; color: #666; text-align: center; line-height: 18px; }
.cmds { display: flex; height: 70px; margin-top: -3px; }
.cmd { flex: none; align-self: flex-start; padding-top: 3px; text-align: center; white-space: nowrap; }
.cmd > svg:first-child { width: 32px; height: 32px; margin: 0 auto 1px; }
.cmd .i6 { display: inline-block; }
.cmd:disabled { color: #999; }
.cmd.on { margin: 0 1px; padding: 2px 0 16px; border: 1px solid #1c7ab0; background: #d5dcea; }
.stack { display: flex; flex-direction: column; padding: 1px 0 0 2px; }
.stack button { display: flex; align-items: center; gap: 4px; height: 22px; white-space: nowrap; }
.w34 { width: 34px; } .w36 { width: 36px; } .w38 { width: 38px; } .w40 { width: 40px; }
.w43 { width: 43px; } .w44 { width: 44px; } .w46 { width: 46px; } .w56 { width: 56px; }
.w57 { width: 57px; } .w58 { width: 58px; } .w59 { width: 59px; } .w60 { width: 60px; }
.w64 { width: 64px; } .w66 { width: 66px; } .w67 { width: 67px; } .w82 { width: 82px; } .w107 { width: 107px; }

/* workspace */
.work { display: grid; grid-template-columns: 1fr 274px; gap: 3px; flex: 1; min-height: 0; }
.left { display: flex; flex-direction: column; min-width: 0; min-height: 0; }
.viewport { position: relative; flex: 1; min-height: 0; overflow: hidden; border: 1px solid #a0a0a0; }
.scene { position: absolute; left: 0; top: 0; }
.cube { position: absolute; right: 16px; top: 6px; width: 94px; height: 113px; }
.node-text { font: 18px "Liberation Sans", sans-serif; fill: #1c1c1c; }
.axis-text { font: 13px "Open Sans", sans-serif; }
.cube-text { font: 24px "Open Sans", sans-serif; fill: #555; }
.viewbar { display: flex; align-items: center; gap: 7px; height: 33px; padding: 0 0 3px 202px; background: #f0edec; }
.viewbar::before { content: ""; width: 1px; height: 26px; margin-right: -2px; background: #666; }
.combo { display: grid; align-items: center; width: 150px; margin-right: -4px; }
.combo select { grid-area: 1 / 1; appearance: none; height: 22px; padding: 0 5px; border: 1px solid #aaa; background: #e9e8e8; }
.combo svg { grid-area: 1 / 1; justify-self: end; margin-right: 5px; pointer-events: none; }
.apart { margin-left: 6px; }
.viewbar .split { width: 5px; height: 27px; margin: 4px 0 0 354px; border: solid #aaa; border-width: 0 1px; }
.messages { height: 125px; border: 1px solid #a0a0a0; background: #fff; }
.messages p { padding: 2px; color: #056005; font: italic bold 14px/16px "Open Sans", sans-serif; }
.toolbar { display: flex; align-items: center; gap: 6px; height: 27px; padding-left: 6px; background: #ecf3fc; }
.grip { width: 2px; height: 14px; background: repeating-linear-gradient(#666 0 2px, transparent 2px 4px); }
.low { align-self: flex-end; margin-bottom: 3px; }
.messages .toolbar { padding: 0 0 2px 6px; }
.messages .grip { margin-right: -1px; }
.messages .low { margin: 0 0 1px 2px; }
.status { display: flex; height: 18px; background: #f0edec; padding-top: 2px; }
.status i { width: 255px; border-right: 1px solid #666; }
.status i:first-child { width: 253px; }

/* property panels */
.props { display: flex; flex-direction: column; min-height: 0; border-right: 1px solid #a0a0a0; border-top: 1px solid #ddd; }
.props h2 { height: 26px; line-height: 26px; text-align: center; font-size: 14px; font-weight: bold; }
.props .toolbar { margin-left: 3px; gap: 4px; padding-left: 3px; }
.props .grip { margin-right: 5px; }
.second { margin-left: 2px; }
.rule { width: 1px; height: 24px; margin-left: 1px; background: #b0b0b0; }
.cat { padding: 2px 3px; border: 1px solid #d0a020; border-radius: 2px; background: #ffc610; }
.filter { width: 110px; height: 24px; margin-left: 2px; padding: 0 3px; border: 1px solid #a8a8a8; font-style: italic; background: #fff; }
::placeholder { color: #777; opacity: 1; }
.sheet { display: flex; flex: 1; min-height: 0; margin-top: 1px; padding: 1px; overflow: hidden; border: 1px solid #a0a0a0; }
.props .sheet { border-right: 0; }
.hint { height: 57px; margin-top: 2px; border: 1px solid #a0a0a0; background: #e8e8e8; }
table { flex: 1; align-self: flex-start; width: 100%; table-layout: fixed; border-spacing: 0; }
.c20 { width: 20px; } .c140 { width: 140px; } .c144 { width: 144px; }
tr { height: 26px; }
tr.sel { height: 28px; }
thead tr { height: 25px; }
th, td { padding: 0; border: solid #ccc; border-width: 0 0 1px; text-align: left; font-weight: normal; }
thead th { padding: 2px 0 0 5px; background: #e2e2e2; font-weight: bold; }
thead th .tri { display: inline-block; margin-right: 8px; vertical-align: -1px; }
td.gut { background: #e2e2e2; border-width: 0 1px 0 0; }
tbody th { border-right-width: 1px; }
tbody th span { display: flex; justify-content: space-between; padding: 0 6px 0 7px; white-space: nowrap; }
td { font-weight: bold; padding-left: 5px; }
td.ro { color: #666; }
td input:not([type]) { display: block; width: 90px; height: 18px; padding: 0; border: 0; font-weight: bold; background: none; }
td input[type="checkbox"] { appearance: none; display: block; width: 14px; height: 14px; margin: 0 0 2px -1px; border: 1px solid #555; background: #fff; }
.pick { display: flex; align-items: center; gap: 6px; padding-right: 2px; }
.pick select { appearance: none; flex: 1; min-width: 0; height: 20px; margin-left: -1px; padding: 0; border: 0; font-weight: bold; background: none; }
.props .pick select { margin-right: 3px; }
.sel th { border: 1px solid #7cc0e4; border-right: 4px solid #fff; background: linear-gradient(#d4ecf8 45%, #b8dff2 50%, #8cc8e8) padding-box; }

/* type editor window */
.dialog { position: absolute; top: 357px; right: 11px; bottom: 0; width: 895px; display: flex; flex-direction: column; border: 1px solid #1c80d0; border-bottom: 0; background: #fff; }
.dialog > header { display: flex; align-items: center; gap: 5px; height: 30px; padding-left: 8px; }
.dialog > header .winctl { margin-left: auto; }
.acts { height: 28px; gap: 3px; }
.search { display: flex; align-items: center; width: 200px; height: 22px; margin-left: -1px; padding: 0 5px; border: 1px solid #ddd; border-top-color: #a8b0b8; background: #fff; }
.search input { flex: 1; min-width: 0; border: 0; padding: 0; font-style: italic; background: none; outline: 0; }
.search + .low { margin-right: 5px; }
.btn { width: 75px; height: 23px; border: 1px solid #707070; background: #ddd; color: #222; }
.bar { width: 1px; height: 22px; background: #a8b0b8; }
.panes { display: flex; flex: 1; gap: 3px; min-height: 0; }
.types { width: 150px; padding: 3px; border: 1px solid #a0a0a0; }
.types li { height: 22px; padding: 0 6px; background: #0078d7; color: #fff; font-weight: bold; line-height: 22px; }
.detail { display: flex; flex: 1; flex-direction: column; min-width: 0; }
.detail h3 { height: 27px; font-size: 18px; line-height: 30px; font-weight: bold; text-align: center; }
.detail .sheet { padding-bottom: 0; }
.detail .messages { height: 75px; margin-top: 2px; }
.tall { height: 274px; }
.tall td { padding: 0; vertical-align: top; }
.preview { display: flex; flex-direction: column; height: 273px; padding: 0 1px 2px 1px; }
.preview .pick { height: 22px; padding: 2px 1px 0 4px; justify-content: space-between; }
.canvas { display: flex; flex: 1; align-items: center; justify-content: center; border: 1px solid #ccc; }
.canvas svg { width: 287px; height: 88px; }
.dots { margin-left: auto; font-weight: bold; font-size: 14px; }
.scroll { display: flex; flex-direction: column; gap: 2px; width: 15px; margin-left: 2px; }
.scroll button { display: grid; place-items: center; height: 17px; border: 1px solid #a8a898; }
.scroll i { flex: 1; border: 1px solid #a8a898; }
.dialog > footer { height: 22px; padding: 4px 8px 0; }
.dialog > footer button { display: block; margin-left: auto; }
```
